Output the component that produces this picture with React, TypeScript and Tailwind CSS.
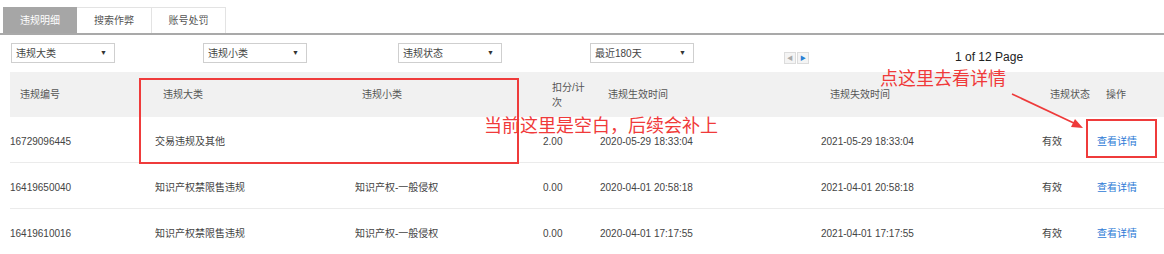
import React from "react";

const F = "font-['Liberation_Sans','Noto_Sans_CJK_SC',sans-serif]";

const headPad = ["pl-[10px]", "pl-[22px]", "pl-[17px]", "pl-[19px]", "pl-[18px]", "pl-[19px]", "pl-[18px]", "pl-[19px]"];
const dataPad = ["pl-0", "pl-[14px]", "pl-[10px]", "pl-[10px]", "pl-[10px]", "pl-[10px]", "pl-[10px]", "pl-[10px]"];

const rows = [
  ["16729096445", "交易违规及其他", "", "2.00", "2020-05-29 18:33:04", "2021-05-29 18:33:04", "有效"],
  ["16419650040", "知识产权禁限售违规", "知识产权-一般侵权", "0.00", "2020-04-01 20:58:18", "2021-04-01 20:58:18", "有效"],
  ["16419610016", "知识产权禁限售违规", "知识产权-一般侵权", "0.00", "2020-04-01 17:17:55", "2021-04-01 17:17:55", "有效"],
];

function Select({ label }: { label: string }) {
  return (
    <div className="w-[104px] h-[20px] border border-[#cfcfcf] bg-white flex items-center justify-between pl-[4px] pr-[7px]">
      <span className="text-[10px] text-[#444]">{label}</span>
      <span className="text-[7px] text-[#333]">▼</span>
    </div>
  );
}

export default function App() {
  return (
    <div className={`relative w-[1164px] h-[254px] bg-white overflow-hidden ${F}`}>
      {/* tabs */}
      <div className="pt-[7px] pl-[3px] flex border-b-2 border-[#a9a9a9]">
        <div className="w-[74px] h-[26px] bg-[#a6a6a6] text-white text-[10px] flex items-center justify-center">违规明细</div>
        <div className="w-[75px] h-[26px] border-t border-r border-[#e3e3e3] text-[#555] text-[10px] flex items-center justify-center">搜索作弊</div>
        <div className="w-[74px] h-[26px] border-t border-r border-[#e3e3e3] text-[#555] text-[10px] flex items-center justify-center">账号处罚</div>
      </div>

      {/* filters */}
      <div className="flex items-start h-[20px] pl-[11px] mt-[8px]">
        <Select label="违规大类" />
        <div className="ml-[88px]"><Select label="违规小类" /></div>
        <div className="ml-[91px]"><Select label="违规状态" /></div>
        <div className="ml-[88px]"><Select label="最近180天" /></div>
        <div className="ml-[90px] mt-[9px] flex gap-[1px]">
          <div className="w-[12px] h-[12px] border border-[#dcdcdc] bg-[#f4f4f4] flex items-center justify-center text-[6px] text-[#aaa]">◀</div>
          <div className="w-[12px] h-[12px] border border-[#dcdcdc] bg-[#f4f4f4] flex items-center justify-center text-[6px] text-[#2a7fd4]">▶</div>
        </div>
        <div className="ml-[146px] mt-[7px] text-[12px] leading-[14px] text-[#222]">1 of 12 Page</div>
      </div>

      {/* table */}
      <div className="ml-[10px] mt-[9px] w-[1154px]">
        <div className="grid grid-cols-[131px_204px_188px_57px_221px_221px_55px_77px] h-[45px] bg-[#f1f1f1] text-[10px] text-[#555] items-center">
          {["违规编号", "违规大类", "违规小类", "扣分/计次", "违规生效时间", "违规失效时间", "违规状态", "操作"].map((h, i) => (
            <div key={i} className={`${headPad[i]} leading-[15px] whitespace-nowrap`}>
              {i === 3 ? (<>扣分/计<br />次</>) : h}
            </div>
          ))}
        </div>
        {rows.map((r, ri) => (
          <div key={ri} className={`grid grid-cols-[131px_204px_188px_57px_221px_221px_55px_77px] h-[46px] items-center pt-[3px] text-[10px] text-[#444] ${ri < 2 ? "border-b border-[#ebebeb]" : ""}`}>
            {r.map((c, i) => (
              <div key={i} className={dataPad[i]}>{c}</div>
            ))}
            <div className={`${dataPad[7]} text-[#2d7ad6]`}>查看详情</div>
          </div>
        ))}
      </div>

      {/* annotations */}
      <div className="absolute left-[139px] top-[78px] w-[380px] h-[86px] border-2 border-[#ef3b3b]" />
      <div className="absolute left-[484px] top-[113px] text-[18px] leading-[22px] text-[#f03a3a] font-['Noto_Sans_CJK_SC',sans-serif]">当前这里是空白，后续会补上</div>
      <div className="absolute left-[880px] top-[67px] text-[18px] leading-[21px] text-[#f03a3a] font-['Noto_Sans_CJK_SC',sans-serif]">点这里去看详情</div>
      <svg className="absolute left-0 top-0" width="1164" height="254" viewBox="0 0 1164 254">
        <line x1="1012" y1="94" x2="1078" y2="125" stroke="#ee3a3a" strokeWidth="1.6" />
        <polygon points="1083,128 1071,127 1075,119" fill="#ee3a3a" />
      </svg>
      <div className="absolute left-[1086px] top-[119px] w-[71px] h-[39px] border-2 border-[#ef3b3b]" />
    </div>
  );
}
